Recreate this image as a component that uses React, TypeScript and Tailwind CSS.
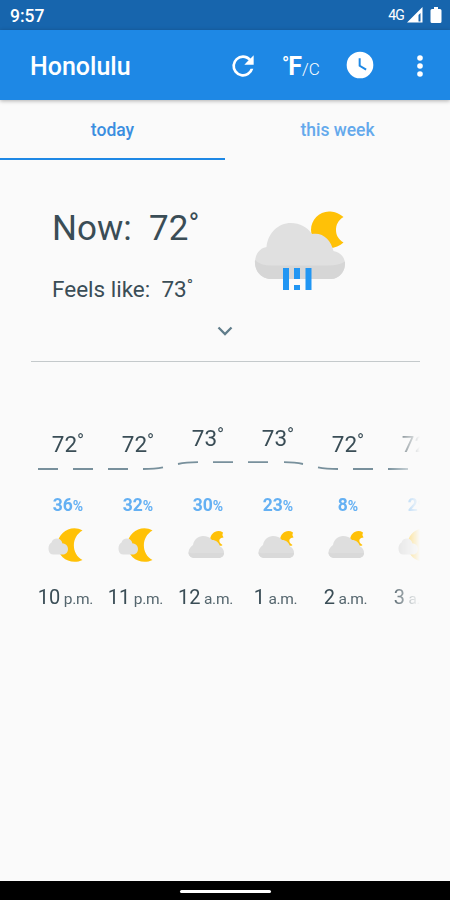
type Sky = "moon" | "cloud";

interface Hour {
  temp: number;
  rain: number;
  hour: number;
  period: string;
  sky: Sky;
  dashes: string;
}

const HOURS: Hour[] = [
  { temp: 72, rain: 36, hour: 10, period: "p.m.", sky: "moon", dashes: "M5 9H25M40 9H60" },
  { temp: 72, rain: 32, hour: 11, period: "p.m.", sky: "moon", dashes: "M5 9H25M40 9Q52 9 60 7.3" },
  { temp: 73, rain: 30, hour: 12, period: "a.m.", sky: "cloud", dashes: "M5 4Q13 2.3 25 2.2M40 2.2H60" },
  { temp: 73, rain: 23, hour: 1, period: "a.m.", sky: "cloud", dashes: "M5 2.2H25M41 2.2Q52 2.3 60 4" },
  { temp: 72, rain: 8, hour: 2, period: "a.m.", sky: "cloud", dashes: "M5 7.3Q13 9 25 9M40 9H60" },
  { temp: 72, rain: 2, hour: 3, period: "a.m.", sky: "moon", dashes: "M5 9H25M40 9H60" },
];

const Degree = ({ className }: { className: string }) => (
  <span className={`relative leading-none ${className}`}>°</span>
);

const RainIcon = () => (
  <svg width="92" height="84" viewBox="0 0 92 84">
    <path
      d="M89.500 8C84 3.500 79 2.500 75 2.500C65 2.500 57 11 57 21C57 31 66 39 75 39C81 39 86 37 89.500 33.500C84 30 82 26 82 21C82 16 84 11.500 89.500 8Z"
      fill="#ffc107"
    />
    <path
      d="M17 70C8 70 1 63 1 53.500C1 45 6 39 12.500 38C14 24 24 14 37 14C46 14 53 18 58 25C69 23 77 31 79.500 42C86 43 91 48 91 55C91 63 85 70 77 70Z"
      fill="#e0e0e0"
    />
    <path
      d="M1 51Q6 56.500 18 56.500H74Q85 56.500 91 52.500C92 62 85 70 77 70H17C7 70 0 61 1 51Z"
      fill="#d6d6d6"
    />
    <path d="M29 59H35V81H29ZM40 59H46V70H40ZM40 76H46V81H40ZM51.500 59H57.500V81H51.500Z" fill="#2196f3" />
  </svg>
);

const MoonIcon = () => (
  <svg width="40" height="40" viewBox="0 0 40 40">
    <path
      d="M34.500 5.500C24 -1 9.500 7 9.500 20C9.500 33 23 40.500 34.500 35C23 29 23 12 34.500 5.500Z"
      fill="#ffc107"
    />
    <path
      d="M5 29.500C2 29.500 .5 26.500 .5 23.500C.5 20.500 1.500 18.500 3.500 17.500C4.500 13 11 12 13.500 16L14.500 18.500C18 18.500 20 21 20 24C20 27 18 29.500 15 29.500Z"
      fill="#e0e0e0"
    />
  </svg>
);

const CloudIcon = () => (
  <svg width="40" height="40" viewBox="0 0 40 40">
    <path
      d="M35 7.500C29 3.500 22 8.500 22 15.500L30.500 20.500C32.500 21 33.500 21 34.500 20Q30.500 17.500 31.500 14.500Q32.500 12.500 35.500 12.500Q33.500 10 35 7.500Z"
      fill="#ffc107"
    />
    <path
      d="M6.500 33C2.500 33 .5 30.500 .5 27.300C.5 24 3 21.500 5 20C6 14.500 10 11 15 11C19 11 21.500 12 24 15C28 15 31 17.500 32 21.500C34.500 22.500 36 25 36 27.500C36 30.500 34 33 30.500 33Z"
      fill="#dedede"
    />
    <path
      d="M.5 27.500Q4 28.500 8 28H36C36 30.500 34 33 30.500 33H6.500C3 33 .5 30.500 .5 27.500Z"
      fill="#d9d9d9"
    />
  </svg>
);

const StatusBar = () => (
  <div className="flex h-[30px] items-center justify-between bg-[#1765ad] pl-[10px] pr-2 text-white">
    <span className="pt-[3px] text-[17.5px] font-medium">9:57</span>
    <div className="flex items-center">
      <span className="pt-px text-[14px] tracking-[-0.8px]">4G</span>
      <svg className="ml-[3px]" width="16" height="16" viewBox="0 0 16 16">
        <path d="M0 15.500L15.500 0V15.500ZM11.500 8V14.500H13.500V6Z" fill="white" fillRule="evenodd" />
      </svg>
      <svg className="ml-[7px]" width="12" height="18" viewBox="0 0 12 18">
        <path d="M4 1H8V3H10Q11.500 3 11.500 4.500V15.500Q11.500 17 10 17H2Q.5 17 .5 15.500V4.500Q.5 3 2 3H4Z" fill="white" />
      </svg>
    </div>
  </div>
);

const AppBar = () => (
  <header className="flex h-[70px] items-center bg-[#1e88e5] pl-[30px] text-white shadow-[0_1px_4px_rgba(0,0,0,0.3)]">
    <h1 className="w-[197px] pt-1 text-[25px] font-medium">Honolulu</h1>
    <svg className="mt-px" width="32" height="32" viewBox="0 0 24 24" fill="white">
      <path d="M17.650 6.350A7.958 7.958 0 0 0 12 4a8 8 0 1 0 7.730 10h-2.080A6 6 0 1 1 12 6c1.660 0 3.140.690 4.220 1.780L13 11h7V4z" />
    </svg>
    <div className="ml-[23px] flex w-[40px] items-baseline whitespace-nowrap pt-[2px]">
      <Degree className="-top-[5px] text-[19px] font-medium" />
      <span className="-ml-px text-[25px] font-bold leading-none">F</span>
      <span className="text-[17px] font-light leading-none">/C</span>
    </div>
    <svg className="ml-[22px]" width="32" height="32" viewBox="0 0 24 24" fill="white">
      <path d="M12 2a10 10 0 1 0 0 20 10 10 0 0 0 0-20zm4.200 14.200L11 13V7h1.500v5.200l4.500 2.700z" />
    </svg>
    <svg className="ml-7 mt-px" width="32" height="32" viewBox="0 0 24 24" fill="white">
      <circle cx="12" cy="6" r="2.100" />
      <circle cx="12" cy="12" r="2.100" />
      <circle cx="12" cy="18" r="2.100" />
    </svg>
  </header>
);

const HourColumn = ({ data }: { data: Hour }) => (
  <div className="flex w-[70px] shrink-0 flex-col items-center">
    <div className={data.temp > 72 ? "h-[35px]" : "h-[35px] pt-[6px]"}>
      <div className="flex h-[27px] items-center text-[22.5px]">
        {data.temp}
        <Degree className="-top-[4px] text-[19px]" />
      </div>
    </div>
    <svg width="70" height="14" viewBox="0 0 70 14">
      <path d={data.dashes} stroke="#78909c" strokeWidth="1.800" fill="none" />
    </svg>
    <div className="mt-[21px] flex h-5 items-baseline font-bold text-[#64b0f3]">
      <span className="text-[17.5px] leading-5">{data.rain}</span>
      <span className="text-[14px] leading-5">%</span>
    </div>
    <div className="mt-[10px]">
      {data.sky === "moon" ? <MoonIcon /> : <CloudIcon />}
    </div>
    <div className="mt-5 flex h-6 w-[70px] items-baseline justify-center whitespace-nowrap pr-[5px] text-[20px] leading-6">
      {data.hour}
      <span className="ml-[3.5px] text-[15.5px] leading-6 tracking-[-0.3px] text-[#55666e]">{data.period}</span>
    </div>
  </div>
);

export default function App() {
  return (
    <div className="flex h-[900px] w-[450px] flex-col overflow-hidden bg-[#fafafa] font-['Roboto','Liberation_Sans',sans-serif] text-[#3a4d56]">
      <StatusBar />
      <AppBar />

      <nav className="grid h-[60px] shrink-0 grid-cols-2 text-center text-[17.5px] font-medium text-[#64a9ec]">
        <div className="border-b-2 border-[#1e88e5] pt-[17px] text-[#3a8ee0]">today</div>
        <div className="pt-[17px]">this week</div>
      </nav>

      <section className="ml-[31px] mr-[30px] flex h-[202px] flex-col items-center border-b border-[#c4c9cb]">
        <div className="flex w-full justify-between pl-[21px] pr-[74px] pt-[49px]">
          <div>
            <div className="-mt-px flex h-10 items-center whitespace-pre text-[35px] leading-none">
              Now:  72
              <Degree className="-top-[4px] text-[29px]" />
            </div>
            <div className="mt-[27px] flex h-7 items-center whitespace-pre text-[22.5px] leading-none">
              Feels like:  73
              <Degree className="-top-[4px] text-[17px]" />
            </div>
          </div>
          <RainIcon />
        </div>
        <svg className="mt-4 mr-px" width="24" height="24" viewBox="0 0 24 24">
          <path d="M5.500 8.500L12 15L18.500 8.500" stroke="#607d8b" strokeWidth="2.300" fill="none" />
        </svg>
      </section>

      <section className="ml-[33px] mt-[63px] flex w-[387px] overflow-hidden mask-[linear-gradient(to_right,black_355px,transparent_387px)]">
        {HOURS.map((item) => (
          <HourColumn key={item.hour} data={item} />
        ))}
      </section>

      <footer className="mt-auto flex h-[19px] shrink-0 items-center justify-center bg-black">
        <div className="mt-[2px] h-[3px] w-[91px] rounded-full bg-white" />
      </footer>
    </div>
  );
}
